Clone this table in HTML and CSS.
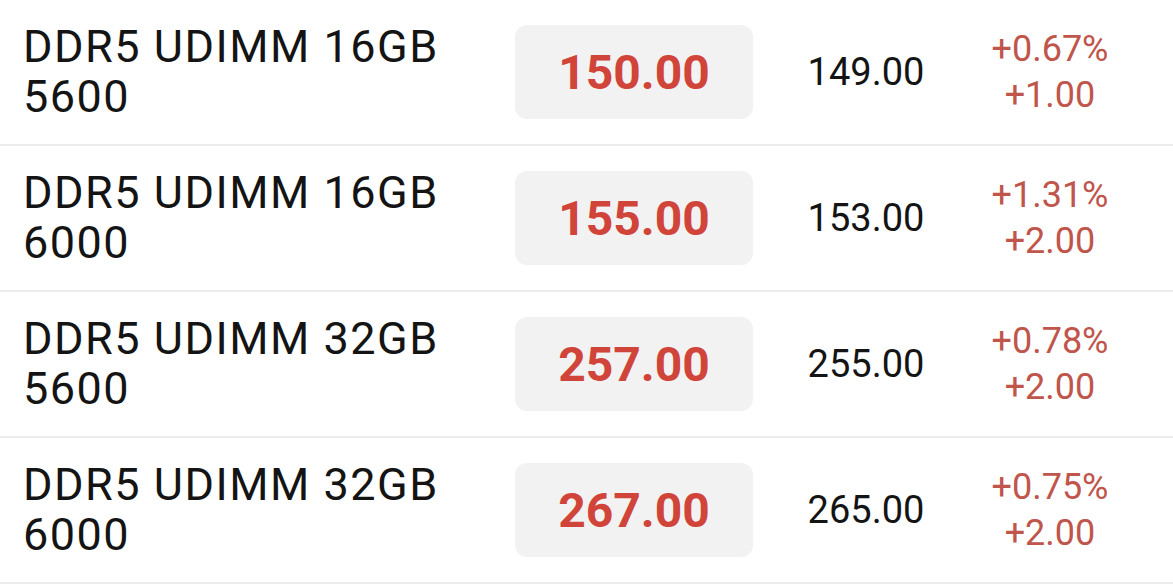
FILE: index.html
```html
<!DOCTYPE html>
<html>
<head>
<meta charset="utf-8">
<link rel="stylesheet" href="styles.css">
</head>
<body>
<div class="list">
  <div class="row">
    <div class="name">DDR5 UDIMM 16GB<br>5600</div>
    <div class="price">150.00</div>
    <div class="prev">149.00</div>
    <div class="change">+0.67%<br>+1.00</div>
  </div>
  <div class="row">
    <div class="name">DDR5 UDIMM 16GB<br>6000</div>
    <div class="price">155.00</div>
    <div class="prev">153.00</div>
    <div class="change">+1.31%<br>+2.00</div>
  </div>
  <div class="row">
    <div class="name">DDR5 UDIMM 32GB<br>5600</div>
    <div class="price">257.00</div>
    <div class="prev">255.00</div>
    <div class="change">+0.78%<br>+2.00</div>
  </div>
  <div class="row">
    <div class="name">DDR5 UDIMM 32GB<br>6000</div>
    <div class="price">267.00</div>
    <div class="prev">265.00</div>
    <div class="change">+0.75%<br>+2.00</div>
  </div>
</div>
</body>
</html>
```
FILE: styles.css
```css
html, body {
  margin: 0;
  padding: 0;
  background: #ffffff;
}
body {
  font-family: Roboto, "Liberation Sans", sans-serif;
  color: #141414;
  width: 1173px;
  height: 585px;
  overflow: hidden;
}
.list {
  display: flex;
  flex-direction: column;
}
.row {
  display: grid;
  grid-template-columns: 492px 238px 226px 142px 1fr;
  align-items: center;
  height: 144px;
  padding-left: 23px;
  border-bottom: 2px solid #ececec;
}
.name {
  font-size: 45px;
  letter-spacing: 1.5px;
  line-height: 50px;
  color: #141414;
}
.price {
  height: 94px;
  display: flex;
  align-items: center;
  justify-content: center;
  background: #f2f2f2;
  border-radius: 12px;
  font-size: 48px;
  font-weight: 700;
  color: #d0443a;
}
.prev {
  text-align: center;
  font-size: 38px;
  color: #141414;
}
.change {
  text-align: center;
  font-size: 36px;
  line-height: 46px;
  color: #c0554c;
}
```
